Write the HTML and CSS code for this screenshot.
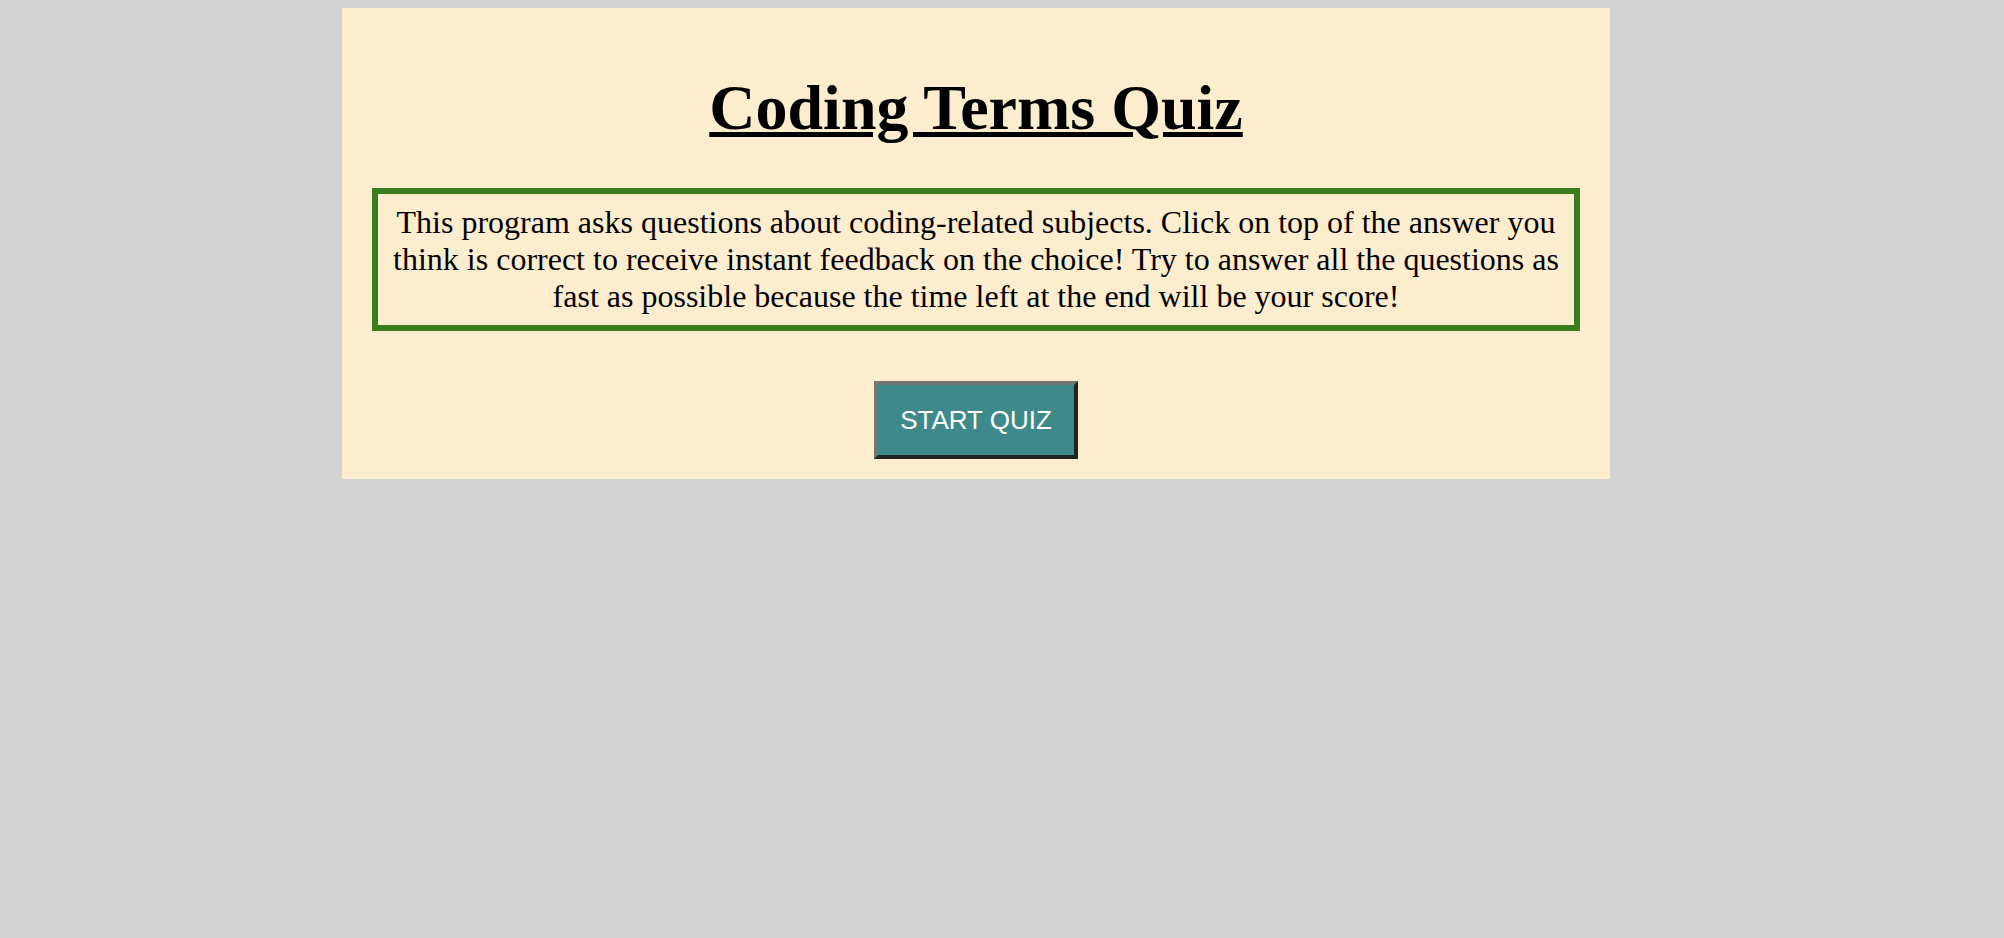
FILE: index.html
```html
<!DOCTYPE html>
<html lang="en">
<head>
<meta charset="utf-8">
<title>Coding Terms Quiz</title>
<link rel="stylesheet" href="styles.css">
</head>
<body>
<main class="quiz">
  <h1 class="title"><span class="title-text">Coding Terms Quiz</span></h1>
  <p class="intro">This program asks questions about coding-related subjects. Click on top of the answer you think is correct to receive instant feedback on the choice! Try to answer all the questions as fast as possible because the time left at the end will be your score!</p>
  <div class="actions">
    <button class="start-btn" type="button">START QUIZ</button>
  </div>
</main>
</body>
</html>
```

FILE: styles.css
```css
html, body {
  margin: 0;
  padding: 0;
}
body {
  background: #d3d3d3;
  font-family: "Liberation Serif", "Times New Roman", serif;
  padding-top: 8px;
  min-height: 930px;
}
.quiz {
  box-sizing: border-box;
  width: 1268px;
  margin-left: 342px;
  background: #fdedcf;
  padding: 0 30px 20px;
  display: flow-root;
}
.title {
  margin: 60px 0 0;
  text-align: center;
  font-size: 64px;
  font-weight: bold;
  line-height: 80px;
  color: #000;
}
.title-text {
  text-decoration: underline;
  text-decoration-thickness: 5px;
  text-underline-offset: 3px;
}
.intro {
  margin: 40px 0 0;
  border: 6px solid #3b7d1e;
  padding: 10px 12px;
  font-size: 32px;
  line-height: 37px;
  text-align: center;
  color: #000;
}
.actions {
  display: flex;
  justify-content: center;
  margin-top: 50px;
}
.start-btn {
  box-sizing: border-box;
  width: 204px;
  height: 78px;
  background: #3e8a8a;
  color: #fff;
  font-family: "Liberation Sans", Arial, sans-serif;
  font-size: 26px;
  border: 4px solid;
  border-color: #777571 #222220 #222220 #777571;
  padding: 0;
  cursor: pointer;
}
```
